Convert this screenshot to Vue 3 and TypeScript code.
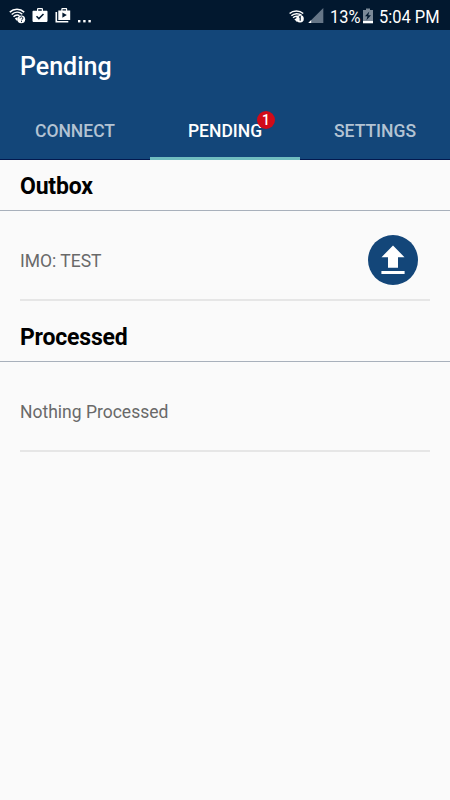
<script setup lang="ts">
import { ref } from 'vue'

interface Tab {
  id: string
  label: string
  badge?: number
}

interface Section {
  title: string
  text: string
  uploadable: boolean
}

const tabs: Tab[] = [
  { id: 'connect', label: 'CONNECT' },
  { id: 'pending', label: 'PENDING', badge: 1 },
  { id: 'settings', label: 'SETTINGS' },
]

const activeTab = ref('pending')

const sections: Section[] = [
  { title: 'Outbox', text: 'IMO: TEST', uploadable: true },
  { title: 'Processed', text: 'Nothing Processed', uploadable: false },
]
</script>

<template>
  <div class="screen">
    <div class="status-bar">
      <div class="status-left">
        <svg class="wifi-unknown" width="17" height="16" viewBox="0 0 17 16">
          <g fill="none" stroke="#fff" stroke-width="1.5">
            <path d="M.8 4.100C4.8.3 11.200.3 15.200 4.100" />
            <path d="M2.700 6.500C6 3.500 10.200 3.500 13.300 6.300" />
            <path d="M4.500 8.800C6.300 6.900 8.800 6.700 10.500 7.600" />
          </g>
          <path d="M5.800 10.400Q7.300 9 8.700 9.600L8.300 13.200z" fill="#fff" />
          <circle cx="12.300" cy="11.300" r="3.900" fill="#fff" />
          <path d="M11 10.300c0-1.900 2.900-1.800 2.900-.1 0 1.200-1.400 1-1.400 2.200M12.500 13.100v1" fill="none" stroke="#02182f" stroke-width="1" />
        </svg>
        <svg class="bag" width="16" height="16" viewBox="0 0 16 16">
          <path d="M1.500 3.700H5V2.400C5 1.500 5.600 1 6.400 1h3.200c.8 0 1.400.5 1.400 1.400v1.300h3.500c.6 0 1 .4 1 1v9c0 .8-.6 1.300-1.400 1.300H1.900C1.100 15 .5 14.500.5 13.700v-9c0-.6.4-1 1-1zM6.200 3.700h3.600V2.200H6.200z" fill="#fff" fill-rule="evenodd" />
          <path d="M4.500 9.300l2.400 2.300 4.600-4.600" fill="none" stroke="#02182f" stroke-width="1.500" />
        </svg>
        <svg class="bag" width="16" height="16" viewBox="0 0 16 16">
          <path d="M1.300 5v9.800h12" fill="none" stroke="#fff" stroke-width="1.600" />
          <path d="M3.300 3.500h3V2.200c0-.8.500-1.200 1.200-1.200H11c.7 0 1.200.400 1.200 1.200v1.300h3v9.500H3.300zM7.500 3.500H11V2.200H7.500z" fill="#fff" fill-rule="evenodd" />
          <path d="M7.400 5.500v5.200l4.400-2.600z" fill="#02182f" />
        </svg>
        <svg class="more" width="13" height="3" viewBox="0 0 13 3" fill="#fff">
          <rect x="0" y="0" width="2.400" height="2.400" />
          <rect x="5.200" y="0" width="2.400" height="2.400" />
          <rect x="10.400" y="0" width="2.400" height="2.400" />
        </svg>
      </div>
      <div class="status-right">
        <svg class="wifi-alert" width="16" height="13" viewBox="0 0 16 13">
          <g fill="none" stroke="#fff" stroke-width="1.500">
            <path d="M.6 3.500C4.300.1 10.500.1 14.200 3.500" />
            <path d="M2.400 5.700C5.200 3.100 9.500 3 12.400 5.200" />
            <path d="M4.100 7.700C5.600 6.300 7.300 6 8.800 6.500" />
          </g>
          <path d="M5.300 9.300Q6.600 8.100 8 8.500V12z" fill="#fff" />
          <circle cx="11" cy="8.700" r="3.800" fill="#fff" />
          <path d="M10 7.300l1.200-.8v4.300" fill="none" stroke="#02182f" stroke-width="1.100" />
        </svg>
        <svg class="signal" width="16" height="16" viewBox="0 0 16 16">
          <path d="M15.300 0v15H.3z" fill="#667687" />
          <path d="M3.200 12.100V15H.3z" fill="#fff" />
        </svg>
        <span class="percent">13%</span>
        <svg class="battery" width="10" height="16" viewBox="0 0 10 16">
          <path d="M3 .5h4V2h3v13.200H0V2h3z" fill="#7b8998" />
          <path d="M0 13h10v2.200H0z" fill="#fff" />
          <path d="M6.300 3.400 2 8.300h2.500l-1.100 3.900L8 7.300H5.300z" fill="#02182f" />
        </svg>
        <span class="clock">5:04 PM</span>
      </div>
    </div>

    <header class="app-bar">
      <h1 class="title">Pending</h1>
      <nav class="tabs">
        <button
          v-for="tab in tabs"
          :key="tab.id"
          class="tab"
          :class="{ active: tab.id === activeTab }"
          @click="activeTab = tab.id"
        >
          <span class="tab-label">{{ tab.label }}<span v-if="tab.badge" class="badge">{{ tab.badge }}</span></span>
        </button>
      </nav>
    </header>

    <main>
      <section v-for="section in sections" :key="section.title" class="section">
        <h2 class="section-title">{{ section.title }}</h2>
        <div class="row">
          <span class="row-text">{{ section.text }}</span>
          <button v-if="section.uploadable" class="upload" aria-label="Upload">
            <svg width="24" height="30" viewBox="0 0 24 30" fill="#fff">
              <path d="M12 .6 23.500 12.200H17v10.600H7V12.200H.5z" />
              <rect x=".4" y="26" width="23.200" height="3" />
            </svg>
          </button>
        </div>
      </section>
    </main>
  </div>
</template>

<style>
body {
  background: #fafafa;
}
</style>

<style scoped>
.screen {
  display: flex;
  flex-direction: column;
  min-height: 800px;
  background: #fafafa;
  font-family: Roboto, sans-serif;
}
button {
  border: 0;
  padding: 0;
  background: none;
  font-family: inherit;
}
svg {
  display: block;
  flex: none;
}
.status-bar {
  display: flex;
  justify-content: space-between;
  height: 30px;
  padding: 0 11px 0 9px;
  box-sizing: border-box;
  background: #02182f;
  color: #fff;
}
.status-left,
.status-right {
  display: flex;
  align-items: flex-start;
}
.wifi-unknown {
  margin-top: 8px;
}
.bag {
  margin: 7px 0 0 6px;
}
.bag + .bag {
  margin-left: 7px;
}
.more {
  margin: 20px 0 0 7px;
}
.wifi-alert {
  margin: 10px 3px 0 0;
}
.signal {
  margin: 8px 6px 0 0;
}
.percent,
.clock {
  line-height: 33px;
  font-size: 19px;
  white-space: nowrap;
  transform: scaleX(0.865);
  transform-origin: left;
}
.percent {
  width: 33px;
}
.clock {
  width: 60px;
}
.battery {
  margin-top: 8px;
  margin-right: 6px;
}
.app-bar {
  height: 130px;
  box-sizing: border-box;
  border-bottom: 1px solid #03194f;
  background: #134679;
}
.title {
  margin: 0;
  padding-left: 20px;
  height: 72px;
  line-height: 74px;
  color: #fff;
  font-size: 25px;
  font-weight: 500;
}
.tabs {
  display: grid;
  grid-template-columns: repeat(3, 1fr);
}
.tab {
  height: 58px;
  box-sizing: border-box;
  border-bottom: 3px solid transparent;
  color: #b3c3d3;
  font-size: 17.500px;
  font-weight: 500;
  line-height: 59px;
}
.tab.active {
  border-bottom-color: #70bdc0;
  color: #fff;
}
.tab-label {
  position: relative;
}
.badge {
  position: absolute;
  top: -10px;
  right: -13px;
  width: 18px;
  height: 18px;
  border-radius: 50%;
  background: #d00b19;
  color: #fff;
  font-size: 14px;
  line-height: 19px;
  text-align: center;
}
.section-title {
  margin: 0;
  height: 50px;
  padding-left: 20px;
  border-bottom: 1px solid #a8b0bb;
  color: #000;
  font-size: 23px;
  letter-spacing: -0.2px;
  font-weight: 700;
  line-height: 53px;
}
.row {
  display: flex;
  align-items: center;
  justify-content: space-between;
  height: 88px;
  margin: 0 20px;
  padding: 0 12.500px 0 0;
  border-bottom: 2px solid #e6e6e6;
}
.section + .section {
  margin-top: 10px;
}
.row-text {
  padding-top: 11px;
  color: #696969;
  font-size: 17.500px;
}
.upload {
  display: flex;
  align-items: center;
  justify-content: center;
  width: 50px;
  height: 50px;
  margin-top: 9px;
  border-radius: 50%;
  background: #134679;
}
</style>
